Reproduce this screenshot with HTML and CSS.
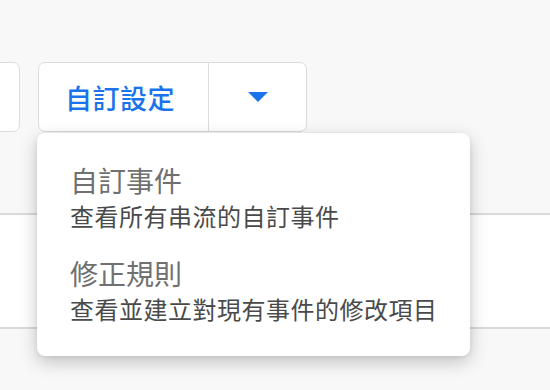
FILE: index.html
```html
<!DOCTYPE html>
<html lang="zh-Hant">
<head>
  <meta charset="UTF-8">
  <meta name="viewport" content="width=device-width, initial-scale=1.0">
  <title>自訂設定</title>
  <link rel="stylesheet" href="styles.css">
</head>
<body>
  <div class="toolbar">
    <button class="btn btn-prev"></button>
    <div class="split">
      <button class="split-main">自訂設定</button>
      <button class="split-toggle" aria-label="展開">
        <svg width="20" height="10" viewBox="0 0 20 10"><path d="M0 0 L20 0 L10 10 Z" fill="#1a73e8"/></svg>
      </button>
    </div>
  </div>

  <div class="table">
    <div class="row"></div>
  </div>

  <!-- dropdown menu -->
  <div class="menu">
    <div class="menu-item">
      <div class="menu-title">自訂事件</div>
      <div class="menu-desc">查看所有串流的自訂事件</div>
    </div>
    <div class="menu-item">
      <div class="menu-title">修正規則</div>
      <div class="menu-desc">查看並建立對現有事件的修改項目</div>
    </div>
  </div>
</body>
</html>
```

FILE: styles.css
```css
body {
  margin: 0;
  background: #f8f8f8;
  font-family: "Noto Sans CJK TC", "Noto Sans", sans-serif;
  height: 390px;
  overflow: hidden;
  position: relative;
}

.toolbar {
  display: flex;
  gap: 18px;
  padding-top: 62px;
  height: 70px;
}

.btn, .split {
  box-sizing: border-box;
  height: 70px;
  background: #fff;
  border: 1px solid #dcdcdc;
  border-radius: 7px;
}

.btn-prev {
  width: 60px;
  margin-left: -40px;
}

.split {
  display: flex;
  width: 269px;
  overflow: hidden;
}

.split button {
  border: none;
  background: none;
  padding: 0;
  font-family: inherit;
}

.split-main {
  width: 170px;
  padding-left: 26px !important;
  text-align: left;
  color: #1a73e8;
  font-size: 27px;
  font-weight: 500;
  letter-spacing: 0.5px;
  border-right: 1px solid #dcdcdc !important;
}

.split-toggle {
  flex: 1;
  display: flex;
  align-items: center;
  justify-content: center;
}

.table {
  margin-top: 81px;
  border-top: 2px solid #dadada;
  border-bottom: 2px solid #dadada;
  background: #fff;
}

.row {
  height: 112px;
}

.menu {
  position: absolute;
  left: 37px;
  top: 133px;
  width: 433px;
  box-sizing: border-box;
  padding: 29px 0 29px 33px;
  background: #fff;
  border-radius: 8px;
  box-shadow: 0 6px 18px rgba(0, 0, 0, 0.22), 0 1px 4px rgba(0, 0, 0, 0.08);
}

.menu-item + .menu-item {
  margin-top: 21px;
}

.menu-title {
  font-size: 28px;
  line-height: 36px;
  color: #707070;
}

.menu-desc {
  font-size: 24px;
  line-height: 36px;
  letter-spacing: 0.5px;
  color: #4a4a4a;
}
```
